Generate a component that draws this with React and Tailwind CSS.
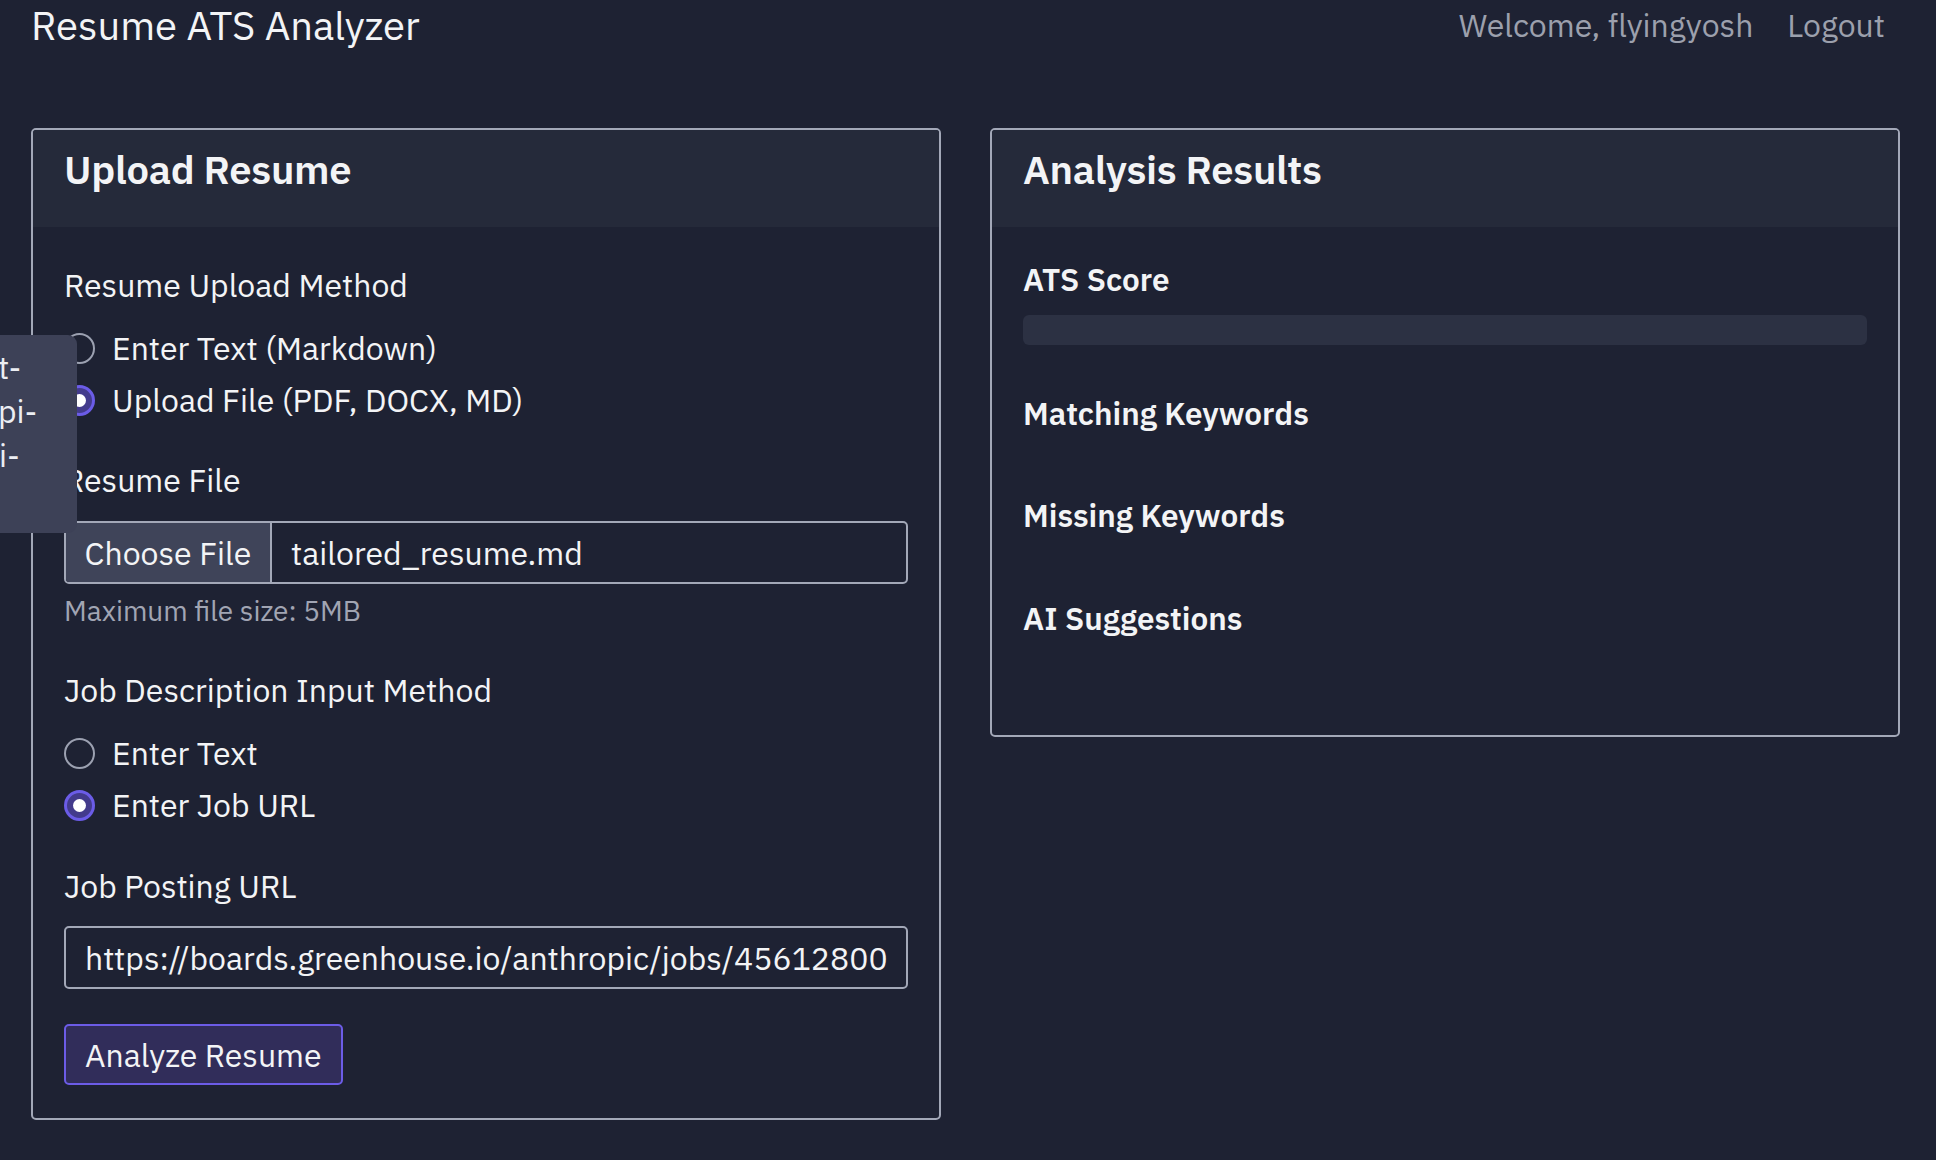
import { useState } from 'react';

const Radio = ({ checked, label, onChange }) => (
  <label className="flex items-center h-[52px] cursor-pointer" onClick={onChange}>
    <span
      className={`w-[31px] h-[31px] rounded-full flex items-center justify-center shrink-0 ${
        checked ? 'border-[3px] border-[#6b5ce7] bg-[#433b8c]' : 'border-2 border-[#9ca1b1] bg-transparent'
      }`}
    >
      {checked && <span className="w-[13px] h-[13px] rounded-full bg-white" />}
    </span>
    <span className="ml-[17px]">{label}</span>
  </label>
);

const Panel = ({ title, children, className = '' }) => (
  <section className={`border-2 border-[#a3a8b8] rounded-[5px] overflow-hidden ${className}`}>
    <div className="h-[97px] bg-[#252a3a] px-[31px] pb-[20px] flex items-center">
      <h2 className="text-[40px] font-semibold tracking-[-0.3px]">{title}</h2>
    </div>
    {children}
  </section>
);

export default function App() {
  const [resumeMethod, setResumeMethod] = useState('file');
  const [jobMethod, setJobMethod] = useState('url');

  return (
    <div className="min-h-screen bg-[#1e2233] text-[#f3f4f6] font-['IBM_Plex_Sans','Noto_Sans',sans-serif] text-[32px] relative overflow-hidden">
      {/* Header */}
      <header className="flex items-center justify-between h-[50px] pl-[31px] pr-[51px]">
        <h1 className="text-[40px] font-normal">Resume ATS Analyzer</h1>
        <div className="flex items-center gap-[34px] text-[32px] text-[#9ca0ad]">
          <span>Welcome, flyingyosh</span>
          <button className="text-[#9ca0ad]">Logout</button>
        </div>
      </header>

      <main className="grid grid-cols-2 gap-[49px] pl-[31px] pr-[36px] mt-[78px] items-start">
        {/* Upload panel */}
        <Panel title="Upload Resume">
          <div className="px-[31px] pt-[36px] pb-[33px] leading-[44px]">
            <div>Resume Upload Method</div>
            <div className="mt-[15px]">
              <Radio checked={resumeMethod === 'text'} label="Enter Text (Markdown)" onChange={() => setResumeMethod('text')} />
              <Radio checked={resumeMethod === 'file'} label="Upload File (PDF, DOCX, MD)" onChange={() => setResumeMethod('file')} />
            </div>

            <div className="mt-[32px]">Resume File</div>
            <div className="mt-[19px] h-[63px] border-2 border-[#a3a8b8] rounded-[5px] flex items-stretch overflow-hidden">
              <div className="w-[206px] bg-[#3f4459] border-r-2 border-[#a3a8b8] flex items-center justify-center">
                Choose File
              </div>
              <div className="flex items-center pl-[19px]">tailored_resume.md</div>
            </div>
            <div className="mt-[9px] text-[28px] leading-[36px] text-[#a1a5b3]">Maximum file size: 5MB</div>

            <div className="mt-[39px]">Job Description Input Method</div>
            <div className="mt-[15px]">
              <Radio checked={jobMethod === 'text'} label="Enter Text" onChange={() => setJobMethod('text')} />
              <Radio checked={jobMethod === 'url'} label="Enter Job URL" onChange={() => setJobMethod('url')} />
            </div>

            <div className="mt-[33px]">Job Posting URL</div>
            <div className="mt-[18px] h-[63px] border-2 border-[#a3a8b8] rounded-[5px] flex items-center px-[19px] overflow-hidden whitespace-nowrap">
              https://boards.greenhouse.io/anthropic/jobs/45612800
            </div>

            <button className="mt-[35px] h-[61px] px-[19px] border-2 border-[#6c5ce7] bg-[#312d5a] rounded-[5px] leading-[44px]">
              Analyze Resume
            </button>
          </div>
        </Panel>

        {/* Results panel */}
        <Panel title="Analysis Results">
          <div className="px-[31px] pt-[31px] pb-[94px] leading-[44px] text-[31.5px] font-semibold">
            <div>ATS Score</div>
            <div className="mt-[13px] h-[30px] rounded-[6px] bg-[#2c3143]" />
            <div className="mt-[47px]">Matching Keywords</div>
            <div className="mt-[58px]">Missing Keywords</div>
            <div className="mt-[59px]">AI Suggestions</div>
          </div>
        </Panel>
      </main>

      {/* Clipped tooltip on left edge */}
      <div className="absolute left-0 top-[335px] w-[77px] h-[198px] bg-[#3d4157] rounded-r-[9px] overflow-hidden pt-[10px] text-[32px] leading-[44px] text-[#eceef3]">
        <div className="-ml-[2px]">t-</div>
        <div className="-ml-[2px]">pi-</div>
        <div className="-ml-[1px]">i-</div>
      </div>
    </div>
  );
}
